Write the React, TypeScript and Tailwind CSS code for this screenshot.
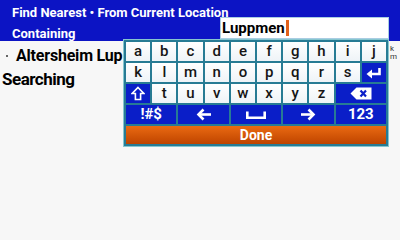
import React from "react";

const F = { fontFamily: 'Roboto, "Liberation Sans", sans-serif' };

function Key({ children, span = 1, blue = false }: { children: React.ReactNode; span?: number; blue?: boolean }) {
  const spanCls = span === 2 ? "col-span-2" : "col-span-1";
  return (
    <div
      className={`${spanCls} h-[19px] flex items-center justify-center ${
        blue
          ? "bg-[#0a1ec8] text-white font-bold text-[15px]"
          : "bg-gradient-to-b from-white to-[#eef3f7] text-[#151515] font-medium text-[15px]"
      }`}
    >
      {children}
    </div>
  );
}

const Shift = () => (
  <svg width="14" height="15" viewBox="0 0 14 15">
    <path d="M7 1.5 L12.8 7.5 H9.6 V13.5 H4.4 V7.5 H1.2 Z" fill="none" stroke="white" strokeWidth="1.6" strokeLinejoin="miter" />
  </svg>
);

const Enter = () => (
  <svg width="16" height="12" viewBox="0 0 16 12">
    <path d="M13.5 1 V7 H5" fill="none" stroke="white" strokeWidth="2.6" />
    <path d="M0.5 7 L6 2.5 V11.5 Z" fill="white" />
  </svg>
);

const Backspace = () => (
  <svg width="22" height="13" viewBox="0 0 22 13">
    <path d="M0.5 6.5 L6.5 0.5 H21.5 V12.5 H6.5 Z" fill="white" />
    <path d="M10.5 3.5 L16 9.5 M16 3.5 L10.5 9.5" stroke="#0a1ec8" strokeWidth="2.2" />
  </svg>
);

const LeftArrow = () => (
  <svg width="16" height="13" viewBox="0 0 16 13">
    <path d="M15 6.5 H3" stroke="white" strokeWidth="2.6" />
    <path d="M7.5 1.5 L2.5 6.5 L7.5 11.5" fill="none" stroke="white" strokeWidth="2.6" />
  </svg>
);

const RightArrow = () => (
  <svg width="16" height="13" viewBox="0 0 16 13">
    <path d="M1 6.5 H13" stroke="white" strokeWidth="2.6" />
    <path d="M8.5 1.5 L13.5 6.5 L8.5 11.5" fill="none" stroke="white" strokeWidth="2.6" />
  </svg>
);

const Space = () => (
  <svg width="20" height="8" viewBox="0 0 20 8">
    <path d="M1.3 0.5 V6.7 H18.7 V0.5" fill="none" stroke="white" strokeWidth="2.6" />
  </svg>
);

export default function App() {
  return (
    <div className="w-[400px] h-[240px] relative overflow-hidden bg-[#f7f7f7]" style={F}>
      {/* header */}
      <div className="h-[41px] bg-[#0c14c4] flex flex-col text-white font-bold">
        <div className="pt-[6px] pl-[12px] h-[17px] text-[13px] leading-[13px] whitespace-nowrap">
          Find Nearest • From Current Location
        </div>
        <div className="flex h-[22px]">
          <div className="w-[220px] pl-[12px] pt-[10px] text-[13px] leading-[13px]">Containing</div>
          <div className="w-[169px] h-[22px] bg-white border border-[#a9cde2] flex items-center pl-[1px]">
            <span className="text-black text-[15px] leading-[15px] font-bold">Luppmen</span>
            <span className="inline-block ml-[1px] w-[3px] h-[16px] bg-[#e2621c]" />
          </div>
        </div>
      </div>

      {/* list */}
      <div className="pt-[7px] font-bold text-black">
        <div className="flex items-center h-[16px]">
          <span className="ml-[6px] w-[2px] h-[2px] bg-[#666]" />
          <span className="ml-[8px] text-[16px] leading-[16px] tracking-[-0.2px] whitespace-nowrap">Altersheim Lup</span>
        </div>
        <div className="mt-[7px] pl-[2px] text-[17px] leading-[17px] tracking-[-0.5px]">Searching</div>
      </div>

      {/* right edge glyphs */}
      <div className="absolute left-[390px] top-[45px] flex flex-col text-[8px] leading-[8px] text-[#333]">
        <span>k</span>
        <span>m</span>
      </div>

      {/* keyboard overlay */}
      <div className="absolute left-[123px] top-[39px] w-[266px] h-[108px] border border-[#86c6cf] bg-[#277b94] p-[2px]">
        <div className="grid grid-cols-10 gap-[2px]">
          {["a", "b", "c", "d", "e", "f", "g", "h", "i", "j"].map((k) => (
            <Key key={k}>{k}</Key>
          ))}
          {["k", "l", "m", "n", "o", "p", "q", "r", "s"].map((k) => (
            <Key key={k}>{k}</Key>
          ))}
          <Key blue>
            <Enter />
          </Key>
          <Key blue>
            <Shift />
          </Key>
          {["t", "u", "v", "w", "x", "y", "z"].map((k) => (
            <Key key={k}>{k}</Key>
          ))}
          <Key blue span={2}>
            <Backspace />
          </Key>
          <Key blue span={2}>!#$</Key>
          <Key blue span={2}>
            <LeftArrow />
          </Key>
          <Key blue span={2}>
            <Space />
          </Key>
          <Key blue span={2}>
            <RightArrow />
          </Key>
          <Key blue span={2}>123</Key>
          <div className="col-span-10 h-[18px] bg-gradient-to-b from-[#ea6a12] to-[#bf4400] flex items-center justify-center text-white font-bold text-[14px]">
            Done
          </div>
        </div>
      </div>
    </div>
  );
}
